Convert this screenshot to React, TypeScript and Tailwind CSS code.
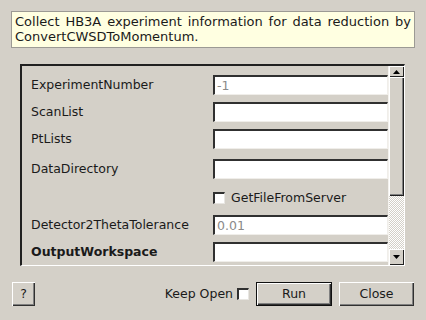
const font = "font-['DejaVu_Sans',sans-serif]";

const Field = ({ value }: { value?: string }) => (
  <div className="h-5 w-[175px] bg-white border-t-2 border-l-2 border-t-[#303030] border-l-[#303030] border-b border-r border-b-[#f0eeea] border-r-[#f0eeea] pl-[2px] text-[12.5px] leading-[17px] text-[#8a8a8a]">
    {value}
  </div>
);

const Row = ({ label, value, bold, className = '' }: { label: string; value?: string; bold?: boolean; className?: string }) => (
  <div className={`flex items-center ${className}`}>
    <span className={`w-[182px] pt-[1px] text-[12.5px] text-[#1a1a1a] ${bold ? 'font-bold' : ''}`}>{label}</span>
    <Field value={value} />
  </div>
);

const CheckBox = () => (
  <span className="inline-block h-3 w-3 bg-white border-t-2 border-l-2 border-t-[#303030] border-l-[#303030] border-b border-r border-b-[#e8e6e2] border-r-[#e8e6e2]" />
);

const Arrow = ({ up }: { up?: boolean }) => (
  <svg width="7" height="4" viewBox="0 0 7 4">
    <polygon points={up ? '3.5,0 7,4 0,4' : '0,0 7,0 3.5,4'} fill="#000" />
  </svg>
);

const ScrollBar = () => (
  <div className="flex w-[16px] flex-col border-l border-l-[#f4f2ee]">
    <div className="flex h-[11px] items-center justify-center shadow-[inset_1px_1px_0_#fff,inset_-1px_-1px_0_#202020]">
      <Arrow up />
    </div>
    <div className="h-[119px] bg-[#d4d0c8] shadow-[inset_1px_1px_0_#fff,inset_-1px_-1px_0_#202020,inset_-2px_-2px_0_#808080]" />
    <div className="flex-1 bg-[repeating-conic-gradient(#ffffff_0_25%,#d4d0c8_0_50%)] bg-[length:2px_2px]" />
    <div className="flex h-[16px] items-center justify-center shadow-[inset_1px_1px_0_#fff,inset_-1px_-1px_0_#202020]">
      <Arrow />
    </div>
  </div>
);

const Button = ({ children, primary, className = '' }: { children: React.ReactNode; primary?: boolean; className?: string }) => (
  <button
    className={`flex h-6 items-center justify-center text-[12.5px] text-[#1a1a1a] bg-[#d4d0c8] ${
      primary
        ? 'border border-[#101010] shadow-[inset_1px_1px_0_#fff,inset_-1px_-1px_0_#303030,inset_-2px_-2px_0_#808080]'
        : 'shadow-[inset_1px_1px_0_#fff,inset_-1px_-1px_0_#303030,inset_-2px_-2px_0_#808080]'
    } ${className}`}
  >
    {children}
  </button>
);

export default function App() {
  return (
    <div className={`h-[320px] w-[426px] bg-[#d4d0c8] pt-[11px] ${font}`}>
      <div className="ml-[11px] h-[37px] w-[404px] border border-[#9c9a94] bg-[#ffffe1] px-[3px] pt-[2px] text-[13px] leading-[15px] text-[#1a1a1a] text-justify [text-align-last:left]">
        Collect HB3A experiment information for data reduction by ConvertCWSDToMomentum.
      </div>

      <div className="ml-[20px] mt-[16px] flex h-[202px] w-[385px] border-t-2 border-l-2 border-t-[#202020] border-l-[#202020] border-b border-r border-b-white border-r-white">
        <div className="flex-1 overflow-hidden pl-[9px] pt-[9px]">
          <Row label="ExperimentNumber" value="-1" />
          <Row label="ScanList" className="mt-[7px]" />
          <Row label="PtLists" className="mt-[7px]" />
          <Row label="DataDirectory" className="mt-[10px]" />
          <div className="mt-[9px] flex h-5 items-center pl-[182px]">
            <CheckBox />
            <span className="ml-[6px] pt-[1px] text-[12.5px] text-[#1a1a1a]">GetFileFromServer</span>
          </div>
          <Row label="Detector2ThetaTolerance" value="0.01" className="mt-[7px]" />
          <Row label="OutputWorkspace" bold className="mt-[7px]" />
        </div>
        <ScrollBar />
      </div>

      <div className="mt-[16px] flex items-center justify-between pl-[12px] pr-[12px]">
        <Button className="w-[23px]">?</Button>
        <div className="flex items-center">
          <span className="text-[12.5px] text-[#1a1a1a]">Keep Open</span>
          <span className="ml-[4px] flex">
            <CheckBox />
          </span>
          <Button primary className="ml-[7px] w-[76px]">Run</Button>
          <Button className="ml-[7px] w-[75px]">Close</Button>
        </div>
      </div>
    </div>
  );
}
